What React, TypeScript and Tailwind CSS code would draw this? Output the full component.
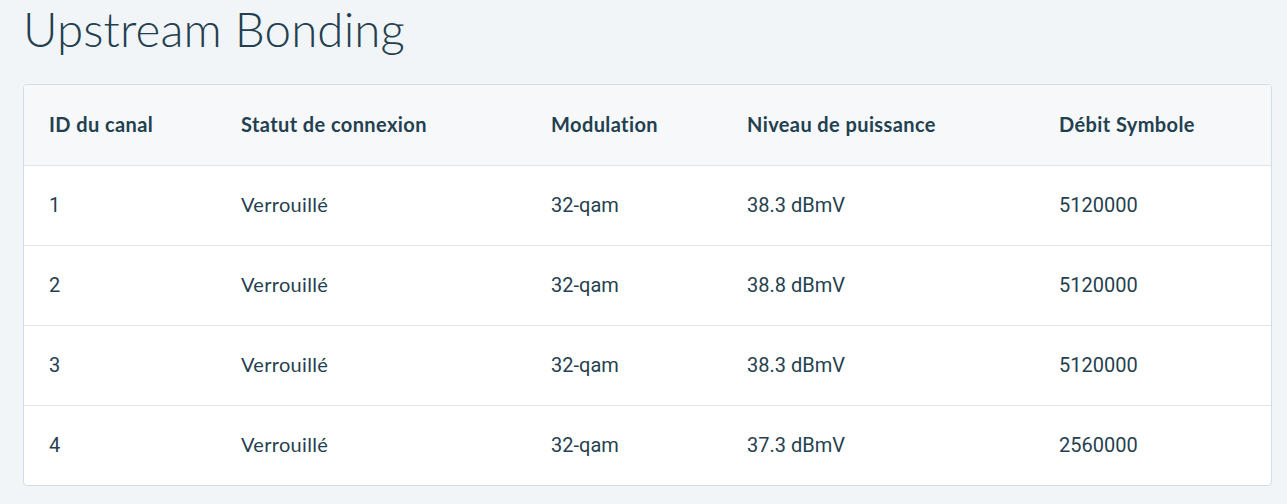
const rows = [
  { id: "1", status: "Verrouillé", mod: "32-qam", power: "38.3 dBmV", rate: "5120000" },
  { id: "2", status: "Verrouillé", mod: "32-qam", power: "38.8 dBmV", rate: "5120000" },
  { id: "3", status: "Verrouillé", mod: "32-qam", power: "38.3 dBmV", rate: "5120000" },
  { id: "4", status: "Verrouillé", mod: "32-qam", power: "37.3 dBmV", rate: "2560000" },
];

export default function App() {
  return (
    <div className="min-h-[504px] bg-[#f2f5f8] px-[23px] pt-0 pb-[18px] font-['Lato',sans-serif] text-[#263f50]">
      <h1 className="text-[47.5px] font-light leading-[58px] tracking-[0.1px] text-[#22404f]">
        Upstream Bonding
      </h1>
      <div className="mt-[26px] w-[1249px] overflow-hidden rounded-[4px] border border-[#d3dde5] bg-white">
        <table className="w-full table-fixed border-collapse text-left text-[20px]">
          <colgroup>
            <col className="w-[192px]" />
            <col className="w-[310px]" />
            <col className="w-[196px]" />
            <col className="w-[312px]" />
            <col />
          </colgroup>
          <thead>
            <tr className="h-[80px] bg-[#f7f8fa]">
              {["ID du canal", "Statut de connexion", "Modulation", "Niveau de puissance", "Débit Symbole"].map((h) => (
                <th key={h} className="pl-[25px] pb-[1px] font-bold tracking-[0.4px] text-[#22404f]">
                  {h}
                </th>
              ))}
            </tr>
          </thead>
          <tbody>
            {rows.map((r) => (
              <tr key={r.id} className="h-[80px] border-t border-[#e1e5e9]">
                <td className="pl-[25px] font-['Roboto',sans-serif]">{r.id}</td>
                <td className="pl-[25px] pb-[2px] tracking-[0.3px]">{r.status}</td>
                <td className="pl-[25px] font-['Roboto',sans-serif]">{r.mod}</td>
                <td className="pl-[25px] font-['Roboto',sans-serif]">{r.power}</td>
                <td className="pl-[25px] font-['Roboto',sans-serif]">{r.rate}</td>
              </tr>
            ))}
          </tbody>
        </table>
      </div>
    </div>
  );
}
